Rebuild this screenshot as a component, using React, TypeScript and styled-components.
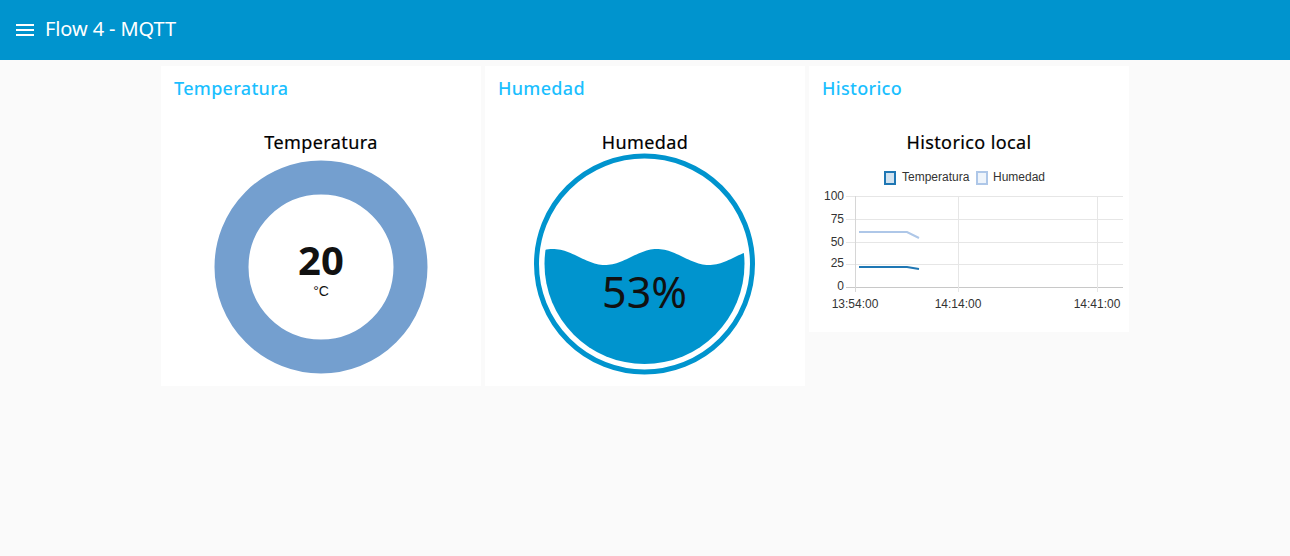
import React from "react";
import styled, { createGlobalStyle } from "styled-components";

const Global = createGlobalStyle`
  html, body { margin: 0; padding: 0; background: #fafafa; }
  body { font-family: "Noto Sans", "Open Sans", sans-serif; }
  * { box-sizing: border-box; }
`;

const Page = styled.div`
  width: 1290px;
  height: 556px;
  background: #fafafa;
  overflow: hidden;
`;

const Header = styled.header`
  height: 60px;
  background: #0094ce;
  display: flex;
  align-items: center;
  padding: 0 0 2px 16px;
  gap: 11px;
  color: #fff;
`;

const HeaderTitle = styled.h1`
  margin: 0;
  font-size: 20px;
  font-weight: 400;
  line-height: 24px;
  letter-spacing: -0.1px;
`;

const MenuIcon = styled.svg`
  display: block;
  margin-top: 2px;
`;

const Main = styled.main`
  display: flex;
  justify-content: center;
  align-items: flex-start;
  gap: 4px;
  padding-top: 6px;
`;

const Card = styled.section<{ $h: number }>`
  width: 320px;
  height: ${(p) => p.$h}px;
  background: #fff;
  display: flex;
  flex-direction: column;
  padding-top: 10px;
`;

const GroupTitle = styled.h2`
  margin: 0;
  padding-left: 13px;
  font-size: 18px;
  font-weight: 500;
  line-height: 24px;
  color: #1bbfff;
  letter-spacing: 0.3px;
`;

const WidgetTitle = styled.div`
  margin-top: 30px;
  text-align: center;
  font-size: 18px;
  font-weight: 400;
  line-height: 24px;
  color: #000;
  letter-spacing: 0.4px;
  -webkit-text-stroke: 0.2px #000;
`;

const GaugeBox = styled.div<{ $mt: number }>`
  display: flex;
  justify-content: center;
  margin-top: ${(p) => p.$mt}px;
`;

const Donut = () => (
  <svg width="214" height="214" viewBox="0 0 214 214">
    <circle cx="107" cy="107" r="89.5" fill="none" stroke="#749fcf" strokeWidth="34" />
    <text
      x="107"
      y="115"
      textAnchor="middle"
      fontFamily="'Noto Sans', sans-serif"
      fontWeight="700"
      fontSize="40"
      fill="#111"
    >
      20
    </text>
    <text
      x="107"
      y="136"
      textAnchor="middle"
      fontFamily="'Liberation Sans', Arial, sans-serif"
      fontSize="14"
      fill="#111"
    >
      °C
    </text>
  </svg>
);

const wavePath = (() => {
  const cx = 110.5;
  const cy = 111;
  const r = 100;
  const pts: string[] = [];
  const x0 = cx - r - 2;
  const x1 = cx + r + 2;
  for (let x = x0; x <= x1; x += 2) {
    const ax = x + 534;
    const y = 257 - 8 * Math.cos((2 * Math.PI * (ax - 553)) / 104) - 153;
    pts.push(`${x.toFixed(1)},${y.toFixed(2)}`);
  }
  return `M${pts[0]} L${pts.slice(1).join(" L")} L${x1},${cy + r + 2} L${x0},${cy + r + 2} Z`;
})();

const Liquid = () => (
  <svg width="222" height="222" viewBox="0 0 222 222">
    <defs>
      <clipPath id="liqclip">
        <circle cx="110.5" cy="111" r="100" />
      </clipPath>
    </defs>
    <circle cx="110.5" cy="111" r="108" fill="none" stroke="#0094ce" strokeWidth="5" />
    <path d={wavePath} fill="#0094ce" clipPath="url(#liqclip)" />
    <text
      x="110.5"
      y="155"
      textAnchor="middle"
      fontFamily="'Noto Sans', sans-serif"
      fontSize="43"
      fill="#111"
    >
      53%
    </text>
  </svg>
);

const axisFont = "'Liberation Sans', Arial, sans-serif";

const LineChart = () => {
  const hy = [36, 59, 82, 104, 127];
  const vx = [46, 149, 288];
  const yl = [
    ["100", 40],
    ["75", 63],
    ["50", 86],
    ["25", 107],
    ["0", 130],
  ] as const;
  const xl = [
    ["13:54:00", 46],
    ["14:14:00", 149],
    ["14:41:00", 288],
  ] as const;
  return (
    <svg width="320" height="160" viewBox="0 0 320 160">
      <rect x="76" y="12" width="10" height="12" fill="#d2e3f0" stroke="#1f77b4" strokeWidth="2" />
      <text x="93" y="21" fontFamily={axisFont} fontSize="12" fill="#333">
        Temperatura
      </text>
      <rect x="168" y="12" width="10" height="12" fill="#eef4fb" stroke="#aec7e8" strokeWidth="2" />
      <text x="184" y="21" fontFamily={axisFont} fontSize="12" fill="#333">
        Humedad
      </text>
      {hy.map((y, i) => (
        <line
          key={y}
          x1="37"
          x2="314"
          y1={y + 0.5}
          y2={y + 0.5}
          stroke={i === 4 ? "#c8c8c8" : "#e6e6e6"}
          strokeWidth="1"
        />
      ))}
      {vx.map((x, i) => (
        <line
          key={x}
          x1={x + 0.5}
          x2={x + 0.5}
          y1="36"
          y2="132"
          stroke={i === 0 ? "#d6d6d6" : "#e6e6e6"}
          strokeWidth="1"
        />
      ))}
      {yl.map(([t, y]) => (
        <text key={t} x="35" y={y} textAnchor="end" fontFamily={axisFont} fontSize="12" fill="#333">
          {t}
        </text>
      ))}
      {xl.map(([t, x]) => (
        <text key={t} x={x} y="148" textAnchor="middle" fontFamily={axisFont} fontSize="12" fill="#333">
          {t}
        </text>
      ))}
      <polyline points="50,72 98,72 110,78" fill="none" stroke="#aec7e8" strokeWidth="2" />
      <polyline points="50,107 98,107 110,109" fill="none" stroke="#1f77b4" strokeWidth="2" />
    </svg>
  );
};

export default function App() {
  return (
    <Page>
      <Global />
      <Header>
        <MenuIcon width="18" height="12" viewBox="0 0 18 12">
          <rect x="0" y="0" width="18" height="2" fill="#fff" />
          <rect x="0" y="5" width="18" height="2" fill="#fff" />
          <rect x="0" y="10" width="18" height="2" fill="#fff" />
        </MenuIcon>
        <HeaderTitle>Flow 4 - MQTT</HeaderTitle>
      </Header>
      <Main>
        <Card $h={320}>
          <GroupTitle>Temperatura</GroupTitle>
          <WidgetTitle>Temperatura</WidgetTitle>
          <GaugeBox $mt={6}>
            <Donut />
          </GaugeBox>
        </Card>
        <Card $h={320}>
          <GroupTitle>Humedad</GroupTitle>
          <WidgetTitle>Humedad</WidgetTitle>
          <GaugeBox $mt={-1}>
            <Liquid />
          </GaugeBox>
        </Card>
        <Card $h={266}>
          <GroupTitle>Historico</GroupTitle>
          <WidgetTitle>Historico local</WidgetTitle>
          <GaugeBox $mt={6}>
            <LineChart />
          </GaugeBox>
        </Card>
      </Main>
    </Page>
  );
}
